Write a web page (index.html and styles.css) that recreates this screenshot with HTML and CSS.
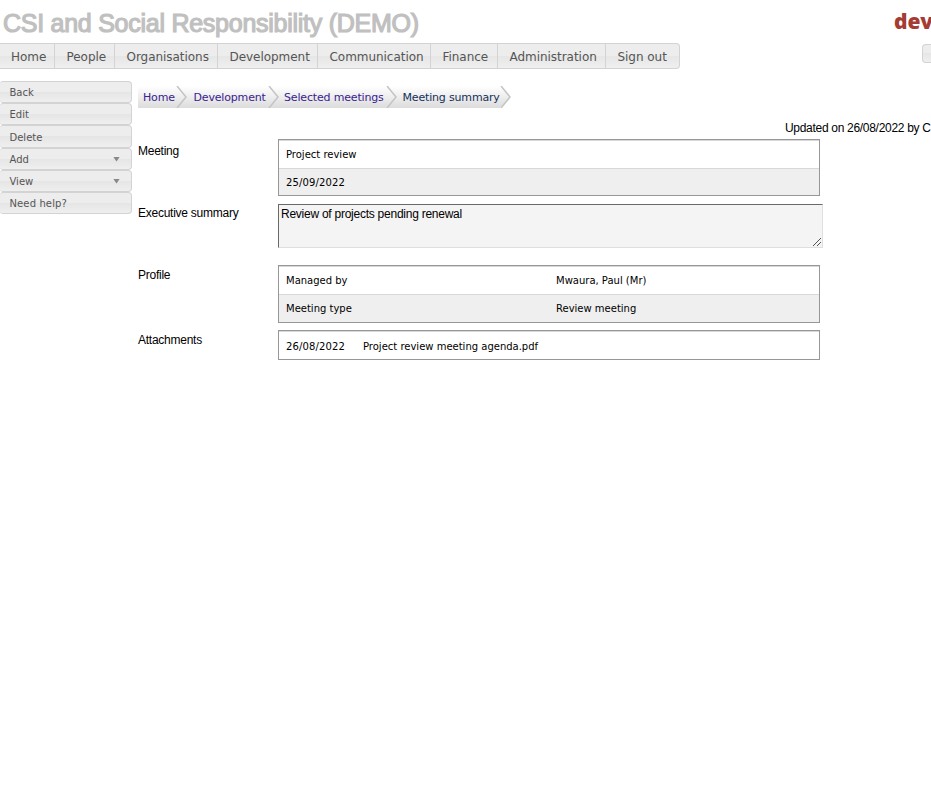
FILE: index.html
```html
<!DOCTYPE html>
<html lang="en">
<head>
<meta charset="utf-8">
<title>Meeting summary</title>
<link rel="stylesheet" href="styles.css">
</head>
<body>
<header class="header">
  <h1 class="title"><span>CSI and Social Responsibility (DEMO)</span></h1>
  <div class="brand">dev</div>
</header>
<div class="navbar">
  <nav class="menu">
    <a>Home</a><a>People</a><a>Organisations</a><a>Development</a><a>Communication</a><a>Finance</a><a>Administration</a><a>Sign out</a>
  </nav>
  <div class="tool"></div>
</div>
<div class="page">
  <aside class="side">
    <a>Back</a>
    <a>Edit</a>
    <a class="tall">Delete</a>
    <a>Add<i class="arrow"></i></a>
    <a>View<i class="arrow"></i></a>
    <a class="help">Need help?</a>
  </aside>
  <main class="main">
    <nav class="crumbs">
      <a class="c1"><span>Home</span><svg viewBox="0 0 11 22"><path class="line" d="M1 0L10 11L1 22"/></svg></a>
      <a class="c2"><span>Development</span><svg viewBox="0 0 11 22"><path class="line" d="M1 0L10 11L1 22"/></svg></a>
      <a class="c3"><span>Selected meetings</span><svg viewBox="0 0 11 22"><path class="line" d="M1 0L10 11L1 22"/></svg></a>
      <a class="c4"><span>Meeting summary</span><svg viewBox="0 0 11 22"><path class="mask" d="M0 0L10 11L0 22H11V0Z"/><path class="line" d="M1 0L10 11L1 22"/></svg></a>
    </nav>
    <div class="updated">Updated on 26/08/2022 by C</div>
    <section class="field meeting">
      <div class="label l1">Meeting</div>
      <div class="table">
        <div class="row"><span>Project review</span></div>
        <div class="row alt"><span class="date">25/09/2022</span></div>
      </div>
    </section>
    <section class="field summary">
      <div class="label l2">Executive summary</div>
      <div class="textbox"><span>Review of projects pending renewal</span>
        <svg class="grip" viewBox="0 0 8 8"><path d="M0 8L8 0M4 8L8 4"/></svg>
      </div>
    </section>
    <section class="field profile">
      <div class="label l3">Profile</div>
      <div class="table two">
        <div class="row"><span>Managed by</span><span>Mwaura, Paul (Mr)</span></div>
        <div class="row alt"><span>Meeting type</span><span>Review meeting</span></div>
      </div>
    </section>
    <section class="field attach">
      <div class="label l4">Attachments</div>
      <div class="table files">
        <div class="row"><span class="date">26/08/2022</span><span>Project review meeting agenda.pdf</span></div>
      </div>
    </section>
  </main>
</div>
</body>
</html>
```
FILE: styles.css
```css
* { box-sizing: border-box; }
body {
  margin: 0;
  background: #fff;
  color: #000;
  font: 12px/14px "Liberation Sans", Arial, sans-serif;
  letter-spacing: -0.25px;
  overflow: hidden;
  height: 790px;
}
.header { display: flex; justify-content: space-between; height: 43px; }
.title {
  margin: 8px 0 0 3px;
  font-size: 25px;
  font-weight: 400;
  line-height: 30px;
  letter-spacing: -0.26px;
  color: #c0c0c0;
  -webkit-text-stroke: 1.2px #c0c0c0;
  white-space: nowrap;
}
.brand {
  width: 37px;
  margin-top: 9px;
  font: 800 21px/24px "Open Sans", sans-serif;
  letter-spacing: -0.1px;
  color: #a43c33;
}
.navbar { display: flex; justify-content: space-between; height: 38px; }
.menu {
  display: grid;
  grid-template-columns: 55px 60px 103px 100px 113px 67px 108px 73px;
  width: 680px;
  height: 26px;
  border: 1px solid #d3d3d3;
  border-left: 0;
  border-radius: 0 4px 4px 0;
  background: linear-gradient(#ededed 0 50%, #e6e6e6 50%, #efefef);
}
.menu a {
  height: 24px;
  padding-left: 11.5px;
  border-right: 1px solid #d3d3d3;
  font: 12px/26px "DejaVu Sans", Verdana, sans-serif;
  letter-spacing: -0.04px;
  color: #555;
}
.menu a:first-child { padding-left: 11px; }
.menu a:last-child { border-right: 0; }
.tool {
  width: 9px;
  height: 19px;
  margin-top: 1px;
  border: 1px solid #d3d3d3;
  border-right: 0;
  border-radius: 4px 0 0 4px;
  background: linear-gradient(#ededed 0 50%, #e6e6e6 50%, #efefef);
}
.page { display: flex; }
.side { width: 132px; flex: none; }
.side a {
  display: flex;
  align-items: center;
  justify-content: space-between;
  height: 22px;
  padding: 2px 11px 0 9.5px;
  border: 1px solid #d3d3d3;
  border-left: 0;
  border-radius: 3px 4px 4px 3px;
  background: linear-gradient(#ededed 0 50%, #e5e5e5 50%, #efefef);
  font: 10px/20px "DejaVu Sans", Verdana, sans-serif;
  letter-spacing: 0;
  color: #555;
}
.side .tall { height: 23px; }
.side .help { letter-spacing: 0.12px; }
.arrow {
  width: 7px;
  height: 5px;
  margin-top: -2px;
  background: #888;
  clip-path: polygon(0 0, 100% 0, 50% 100%);
}
.main { flex: none; width: 793px; margin-left: 6px; }
.crumbs {
  display: flex;
  width: 373px;
  height: 22px;
  margin-top: 5px;
  background: linear-gradient(#fff, #dcdcdc);
  font: 11px/23px "DejaVu Sans", Verdana, sans-serif;
  letter-spacing: -0.17px;
  color: #3a2291;
}
.crumbs a { display: flex; flex: none; justify-content: space-between; padding-left: 5px; white-space: nowrap; }
.crumbs svg { width: 11px; height: 22px; flex: none; }
.crumbs .mask { fill: #fff; }
.crumbs .line { fill: none; stroke: #c4c4c4; stroke-width: 1.5; }
.c1 { width: 49px; }
.crumbs .c2 { width: 92px; padding-left: 6.5px; }
.c3 { width: 118px; }
.crumbs .c4 { width: 114px; color: #14305c; padding-left: 5.5px; }
.updated { height: 31px; margin-left: 647px; padding-top: 13px; white-space: nowrap; letter-spacing: -0.3px; }
.field { display: flex; }
.label { width: 140px; flex: none; }
.l1 { padding-top: 5px; }
.l2 { padding-top: 2px; }
.l3 { padding-top: 3px; }
.l4 { padding-top: 3px; }
.table {
  width: 542px;
  border: 1px solid #979797;
  font: 10px/27px "DejaVu Sans", Verdana, sans-serif;
  letter-spacing: 0;
}
.row { display: flex; height: 28px; padding-left: 7px; border-top: 1px solid #d8d8d8; white-space: nowrap; }
.alt { height: 27px; background: #efefef; }
.date { letter-spacing: 0.14px; }
.two .row span { width: 270px; flex: none; }
.files .row span:first-child { width: 77px; }
.files .row { padding-top: 1px; }
.meeting { height: 65px; }
.meeting .table { height: 57px; }
.summary { height: 61px; }
.profile { height: 65px; }
.profile .table { height: 58px; }
.profile .alt { height: 28px; }
.attach .table { height: 30px; }
.textbox {
  position: relative;
  width: 545px;
  height: 44px;
  padding: 2px 2px;
  background: #f4f4f4;
  border: 1px solid #dfdfdf;
  border-top-color: #696969;
  border-left-color: #696969;
}
.grip { position: absolute; right: 1px; bottom: 1px; width: 8px; height: 8px; }
.grip path { stroke: #555; stroke-width: 1; fill: none; }
```
